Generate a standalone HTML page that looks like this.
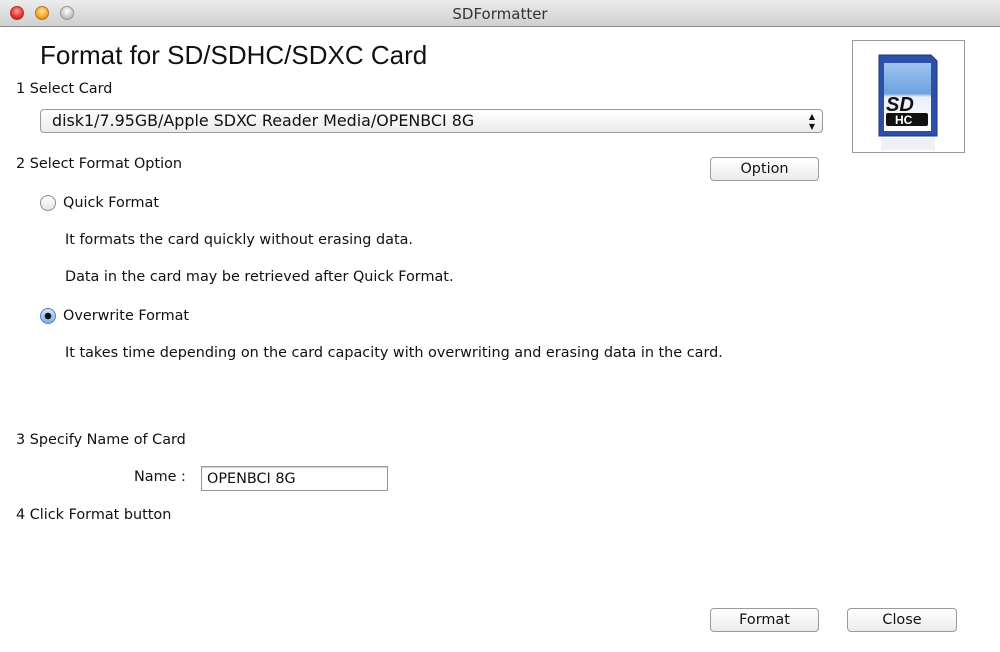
<!DOCTYPE html>
<html><head><style>
*{margin:0;padding:0;box-sizing:border-box}
body{width:1000px;height:652px;overflow:hidden;background:#fff;font-family:"DejaVu Sans",sans-serif;color:#111;position:relative}
.t{position:absolute;font-size:14.4px;white-space:nowrap}
.bar{position:absolute;left:0;top:0;width:1000px;height:27px;background:linear-gradient(#ececec,#cfcfcf);border-bottom:1px solid #8c8c8c}
.dot{position:absolute;top:6px;width:14px;height:14px;border-radius:50%}
.btn{position:absolute;height:24px;border:1px solid #9a9a9a;border-radius:4px;background:linear-gradient(#fff,#ebebeb);font-size:14.4px;text-align:center;line-height:22px}
.radio{position:absolute;width:16px;height:16px;border-radius:50%;border:1px solid #8a8a8a;background:linear-gradient(#fff,#e4e4e4)}
</style></head><body>
<div class="bar">
<div class="dot" style="left:10px;background:radial-gradient(circle at 50% 35%,#ff9c90,#e0352b 60%,#a11);border:1px solid #a33"></div>
<div class="dot" style="left:35px;background:radial-gradient(circle at 50% 35%,#ffe49a,#f5a623 60%,#b76d00);border:1px solid #b07a20"></div>
<div class="dot" style="left:60px;background:radial-gradient(circle at 50% 35%,#fff,#c8c8c8 60%,#999);border:1px solid #999"></div>
<div class="t" style="left:0;width:1000px;text-align:center;top:5px;font-size:15px;color:#333">SDFormatter</div>
</div>
<div class="t" style="left:40px;top:40px;font-size:26px;font-family:'Liberation Sans',sans-serif">Format for SD/SDHC/SDXC Card</div>
<div class="t" style="left:16px;top:81px">1 Select Card</div>
<div class="btn" style="left:40px;top:109px;width:783px;text-align:left;padding-left:11px;font-size:15.9px;">disk1/7.95GB/Apple SDXC Reader Media/OPENBCI 8G<span style="position:absolute;right:7px;top:0;font-size:8px;line-height:10px;padding-top:2px">▲<br>▼</span></div>
<div style="position:absolute;left:852px;top:40px;width:113px;height:113px;border:1px solid #999;background:#fff">
<svg width="111" height="111" viewBox="0 0 111 111">
<defs><linearGradient id="g" x1="0" y1="0" x2="0" y2="1"><stop offset="0" stop-color="#9ec4f0"/><stop offset="0.45" stop-color="#6da1de"/><stop offset="0.5" stop-color="#e8f0fa"/><stop offset="1" stop-color="#fff"/></linearGradient></defs>
<path d="M26 14 H78 L84 20 V95 H26 Z" fill="#2d4fa8" stroke="#1b357a"/>
<path d="M31 22 H78 V90 H31 Z" fill="url(#g)"/>
<text x="33" y="70" font-family="Liberation Sans" font-weight="bold" font-style="italic" font-size="20" fill="#111">SD</text>
<rect x="33" y="72" width="42" height="13" rx="2" fill="#111"/>
<text x="42" y="83" font-family="Liberation Sans" font-weight="bold" font-size="12" fill="#fff">HC</text>
<rect x="28" y="97" width="54" height="12" fill="#eef1f6"/>
</svg></div>
<div class="t" style="left:16px;top:156px">2 Select Format Option</div>
<div class="btn" style="left:710px;top:157px;width:109px">Option</div>
<div class="radio" style="left:40px;top:195px"></div>
<div class="t" style="left:63px;top:195px">Quick Format</div>
<div class="t" style="left:65px;top:232px">It formats the card quickly without erasing data.</div>
<div class="t" style="left:65px;top:269px">Data in the card may be retrieved after Quick Format.</div>
<div class="radio" style="left:40px;top:308px;background:radial-gradient(circle,#111 0 3px,transparent 3.5px),linear-gradient(#cfe3fb,#7fb0ea);border-color:#5a7fb5"></div>
<div class="t" style="left:63px;top:308px">Overwrite Format</div>
<div class="t" style="left:65px;top:345px">It takes time depending on the card capacity with overwriting and erasing data in the card.</div>
<div class="t" style="left:16px;top:432px">3 Specify Name of Card</div>
<div class="t" style="left:134px;top:469px">Name :</div>
<div style="position:absolute;left:201px;top:466px;width:187px;height:25px;border:1px solid #999;box-shadow:inset 0 1px 1px #ccc;font-size:14.4px;padding:4px 0 0 5px">OPENBCI 8G</div>
<div class="t" style="left:16px;top:507px">4 Click Format button</div>
<div class="btn" style="left:710px;top:608px;width:109px">Format</div>
<div class="btn" style="left:847px;top:608px;width:110px">Close</div>
</body></html>
